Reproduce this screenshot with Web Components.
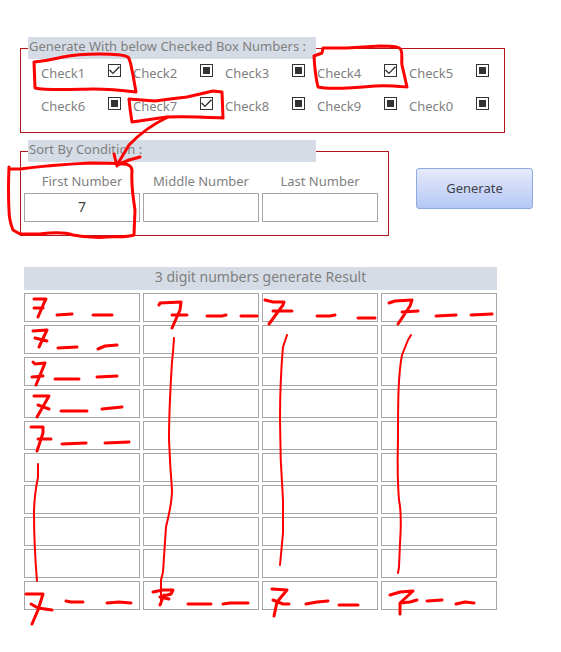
<!DOCTYPE html>
<html lang="en">
<head>
<meta charset="utf-8">
<meta name="viewport" content="width=device-width, initial-scale=1">
<title>3 digit numbers</title>
<style>
  body {
    margin: 0;
    background: #fff;
    color: #7f7f7f;
    font: 13px/20px "Noto Sans", "Open Sans", sans-serif;
  }
</style>
</head>
<body>
<number-generator></number-generator>

<script>
// <group-box caption="..."> — red framed fieldset with a shaded legend.
class GroupBox extends HTMLElement {
  constructor() {
    super();
    this.attachShadow({ mode: "open" });
    this.shadowRoot.innerHTML = `
      <style>
        :host { display: block; }
        fieldset {
          margin: 0;
          padding: 0 3px;
          min-width: 0;
          border: 1px solid #b91419;
        }
        legend {
          box-sizing: border-box;
          width: 288px;
          max-width: 90%;
          height: 22px;
          margin-left: 4px;
          padding: 0 1px;
          line-height: 18px;
          background: #d6dce5;
        }
      </style>
      <fieldset><legend></legend><slot></slot></fieldset>
    `;
  }

  connectedCallback() {
    this.shadowRoot.querySelector("legend").textContent = this.getAttribute("caption");
  }
}

// <check-item label="..." state="on|mixed"> — label followed by a tri-state box.
class CheckItem extends HTMLElement {
  constructor() {
    super();
    this.attachShadow({ mode: "open" });
    this.shadowRoot.innerHTML = `
      <style>
        :host { display: block; }
        label {
          display: flex;
          justify-content: space-between;
          line-height: 18px;
        }
        input {
          appearance: none;
          display: grid;
          place-items: center;
          box-sizing: border-box;
          width: 13px;
          height: 13px;
          margin: 0;
          border: 1px solid #333;
          background: #fff;
        }
        input:indeterminate::before {
          content: "";
          width: 7px;
          height: 7px;
          background: #333;
        }
        input:checked::before {
          content: "";
          width: 11px;
          height: 11px;
          background: #333;
          clip-path: polygon(0 50%, 10% 42%, 36% 68%, 90% 12%, 100% 20%, 36% 84%);
        }
      </style>
      <label><span></span><input type="checkbox"></label>
    `;
  }

  connectedCallback() {
    const box = this.shadowRoot.querySelector("input");
    this.shadowRoot.querySelector("span").textContent = this.getAttribute("label");
    box.checked = this.getAttribute("state") === "on";
    box.indeterminate = this.getAttribute("state") === "mixed";
  }
}

// <digit-field label="..." value="..."> — heading above a centred text box.
class DigitField extends HTMLElement {
  constructor() {
    super();
    this.attachShadow({ mode: "open" });
    this.shadowRoot.innerHTML = `
      <style>
        :host { display: block; min-width: 0; }
        label { display: block; text-align: center; }
        span { display: block; height: 22px; line-height: 20px; }
        input {
          display: block;
          box-sizing: border-box;
          width: 100%;
          height: 29px;
          padding: 0 0 2px;
          border: 1px solid #a6a6a6;
          border-radius: 0;
          background: #fff;
          color: #404040;
          font: inherit;
          font-size: 14px;
          text-align: center;
        }
      </style>
      <label><span></span><input type="text" maxlength="1"></label>
    `;
  }

  connectedCallback() {
    this.shadowRoot.querySelector("span").textContent = this.getAttribute("label");
    this.shadowRoot.querySelector("input").value = this.getAttribute("value") || "";
  }
}

// <push-button> — blue gradient button.
class PushButton extends HTMLElement {
  constructor() {
    super();
    this.attachShadow({ mode: "open" });
    this.shadowRoot.innerHTML = `
      <style>
        :host { display: block; }
        button {
          width: 100%;
          height: 41px;
          padding: 0;
          border: 1px solid #8faadc;
          border-radius: 3px;
          background: linear-gradient(#e6ebfb, #b4c7f5);
          color: #404048;
          font: inherit;
        }
      </style>
      <button type="button"><slot></slot></button>
    `;
  }
}

// <result-table rows="10" columns="4"> — shaded heading over a grid of cells.
class ResultTable extends HTMLElement {
  constructor() {
    super();
    this.attachShadow({ mode: "open" });
  }

  connectedCallback() {
    const rows = Number(this.getAttribute("rows"));
    const columns = Number(this.getAttribute("columns"));
    const row = `<tr>${"<td></td>".repeat(columns)}</tr>`;
    this.shadowRoot.innerHTML = `
      <style>
        :host { display: block; }
        table {
          width: 100%;
          table-layout: fixed;
          border-collapse: separate;
          border-spacing: 3px;
        }
        th {
          height: 23px;
          padding: 0;
          font-size: 14px;
          font-weight: normal;
          line-height: 20px;
          vertical-align: top;
          background: #d6dce5;
        }
        td {
          box-sizing: border-box;
          height: 29px;
          padding: 0;
          border: 1px solid #a6a6a6;
        }
      </style>
      <table>
        <thead><tr><th colspan="${columns}"><slot></slot></th></tr></thead>
        <tbody>${row.repeat(rows)}</tbody>
      </table>
    `;
  }
}

// <ink-layer> — freehand red pen marks lying over the form.
const RINGS = [
  // Check1
  "M34 62C44 61 54 59 63 57S88 54 100 54S122 54 128 57C131 61 131 67 133 75L136 92C120 90 106 89 93 89S48 91 35 88L34 62",
  // Check4
  "M314 56L322 53L323 48L347 48L380 46C390 46 400 46 401 50C403 55 401 60 402 65L407 87C396 86 386 85 375 86S330 90 318 87Q315 75 314 56",
  // Check7
  "M129 99L155 101L170 99L187 97L213 91L222 92L223 118C203 117 185 116 167 117L132 122Q130 110 129 99",
  // arrow to the first number
  "M168 117Q145 128 129 145L117 165M114 154L117 166M117 165L129 160L140 157",
  // First Number
  "M11 169L20 169Q50 165 90 163Q110 163 123 164Q132 164 132 171C131 185 133 197 135 210L134 235C125 238 115 236 107 237S83 237 73 235Q62 231 40 234L20 234L13 230Q9 220 9 210Q8 190 9 167"
];
const DIGITS = [
  // first column
  "M34 299H46L44 303L38 317M34 308H43M57 315L72 314M93 315H112",
  "M33 331L47 330L39 347M35 338L47 341M58 348L77 347M98 349L105 346L117 345",
  "M33 362L35 364L45 363L36 385M32 377L43 376M55 379H79M97 377L117 376",
  "M34 396H49L37 417M38 405L49 409M61 411H87M102 409L122 407",
  "M31 427H43V433L37 451M38 439H51M62 444L86 443M105 443L129 442",
  "M26 594H43L38 610L32 624M31 604L38 608L52 610M66 601L71 602L83 602M107 603L119 602L131 603",
  // second column
  "M159 305L160 303L181 302L180 310L172 328M172 315L187 315M207 316L222 316L226 315M241 316H257",
  "M153 592L163 590L173 590L171 594L160 597L169 599M164 595L160 605M188 604H211M223 604L230 603H248",
  // third column
  "M265 300L273 302H284L283 305L269 324M273 311H292M317 316H330L335 315M358 318H375",
  "M272 589L287 590L277 602L274 616M273 600L283 604H289M306 604L317 602L328 601M339 605H358",
  // fourth column
  "M389 303L395 301L412 300L410 306L398 324M402 312L418 311M436 316L456 315M471 315L492 314",
  "M390 595L400 592L413 591L400 603L410 602L417 600M400 603V614M427 601L442 600M456 604L465 602L474 603"
];
const LINES = [
  "M38 464V477Q34 497 34 513Q34 545 37 581",
  "M174 338L173 352L172 362Q169 410 169 440Q170 465 172 490Q172 503 166 527L163 572L161 580V604",
  "M287 335L283 347Q280 380 280 420Q280 460 283 500V533L280 565",
  "M411 335L408 340L402 355C398 375 398 405 398 440Q397 475 399 500Q402 515 400 543L399 567L398 573"
];

class InkLayer extends HTMLElement {
  constructor() {
    super();
    this.attachShadow({ mode: "open" });
    const paths = list => list.map(d => `<path d="${d}"/>`).join("");
    this.shadowRoot.innerHTML = `
      <style>
        :host {
          position: absolute;
          top: 0;
          left: 0;
          pointer-events: none;
        }
        svg { display: block; }
        g { fill: none; stroke: #f00; stroke-linejoin: round; stroke-linecap: round; }
      </style>
      <svg width="561" height="652" viewBox="0 0 561 652" aria-hidden="true">
        <g stroke-width="3">${paths(RINGS)}</g>
        <g stroke-width="3">${paths(DIGITS)}</g>
        <g stroke-width="2">${paths(LINES)}</g>
      </svg>
    `;
  }
}

// <number-generator> — the whole form.
class NumberGenerator extends HTMLElement {
  constructor() {
    super();
    this.attachShadow({ mode: "open" });
    const checked = ["1", "4", "7"];
    const checks = [..."1234567890"].map(n =>
      `<check-item label="Check${n}" state="${checked.includes(n) ? "on" : "mixed"}"></check-item>`
    ).join("");
    this.shadowRoot.innerHTML = `
      <style>
        :host { display: block; position: relative; }
        main { padding: 37px 28px 40px 20px; }
        .numbers { margin-right: 28px; }
        .checks {
          display: grid;
          grid-template-columns: repeat(5, 1fr);
          gap: 15px 12px;
          padding: 5px 12px 17px 17px;
        }
        .sort {
          display: flex;
          align-items: center;
          gap: 27px;
          margin-top: 7px;
        }
        .sort group-box { flex: 1; }
        .sort push-button { width: 117px; }
        .fields {
          display: grid;
          grid-template-columns: repeat(3, 1fr);
          gap: 3px;
          padding: 9px 7px 13px 0;
        }
        result-table { margin: 28px 33px 0 1px; }
      </style>
      <main>
        <group-box class="numbers" caption="Generate With below Checked Box Numbers :">
          <div class="checks">${checks}</div>
        </group-box>
        <div class="sort">
          <group-box caption="Sort By Condition :">
            <div class="fields">
              <digit-field label="First Number" value="7"></digit-field>
              <digit-field label="Middle Number"></digit-field>
              <digit-field label="Last Number"></digit-field>
            </div>
          </group-box>
          <push-button>Generate</push-button>
        </div>
        <result-table rows="10" columns="4">3 digit numbers generate Result</result-table>
      </main>
      <ink-layer></ink-layer>
    `;
  }
}

customElements.define("group-box", GroupBox);
customElements.define("check-item", CheckItem);
customElements.define("digit-field", DigitField);
customElements.define("push-button", PushButton);
customElements.define("result-table", ResultTable);
customElements.define("ink-layer", InkLayer);
customElements.define("number-generator", NumberGenerator);
</script>
</body>
</html>
